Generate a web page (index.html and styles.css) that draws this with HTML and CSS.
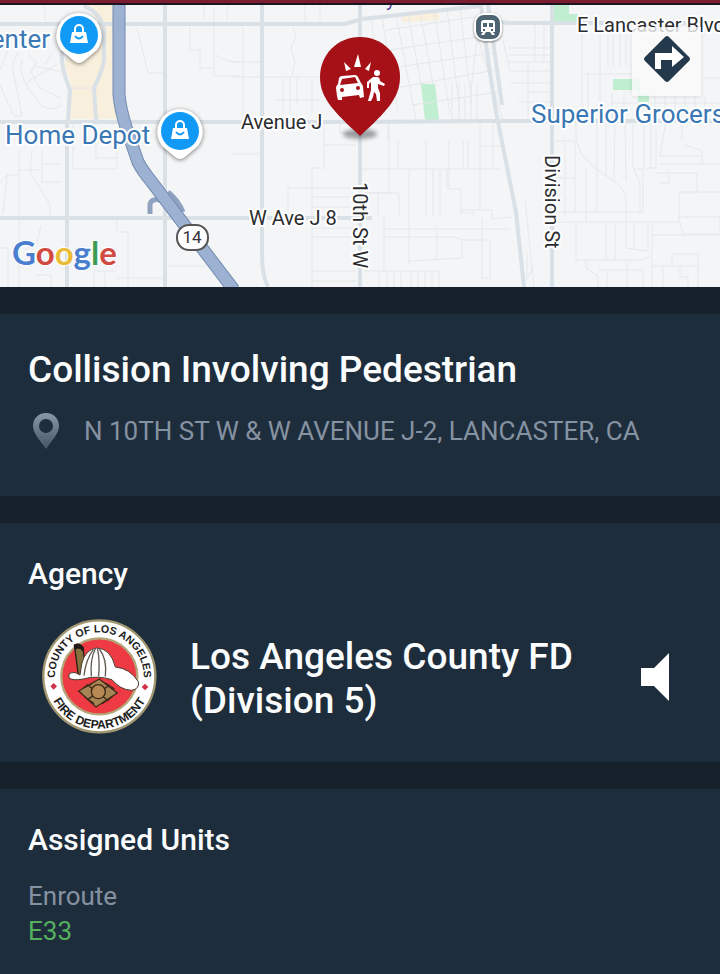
FILE: index.html
```
<!DOCTYPE html>
<html lang="en">
<head>
    <meta charset="UTF-8">
    <meta name="viewport" content="width=device-width, initial-scale=1.0">
    <title>Collision Involving Pedestrian</title>
    <link rel="stylesheet" href="styles.css">
</head>
<body>

    <header class="map">
        <svg class="map-canvas" viewBox="0 5 720 282" preserveAspectRatio="xMidYMid slice" role="img" aria-label="Incident map">
            <!-- parks and shopping areas -->
            <path class="sand" d="M84 5H114V95L119 119H70L72 88L64 62L75 50L98 45L98 20Z M401 17L438 12L440 20L403 22Z"/>
            <path class="park" d="M421 84H435L439 120H425Z M554 5H569V14H578V25H554Z M613 79H640V93H649V102H638V90H613Z"/>

            <!-- side streets -->
            <g class="street">
                <path d="M45 5V21 M8 50L0 70 M0 85L14 116H22L12 65L18 52 M22 60Q18 72 28 88L42 106Q54 112 61 105 M28 54L36 62L31 72L40 88L61 98 M27 82L57 64 M35 66L62 72 M52 54L45 64 M72 88H92"/>
                <path d="M137 27L148 73H163 M190 27V50H200V68H215 M214 8V76H240 M214 54Q226 62 240 62 M227 5V20 M204 5V20 M73 121V169H117V148 M96 121V158H117 M19 150V217 M32 150L30 172L38 185L50 205V217 M42 150V182H60 M0 182L7 175H18 M7 175L3 214 M41 164H60 M19 170H40 M19 220V287 M41 225L37 243L24 250 M117 218V232H128V278 M117 278H163 M128 278V287 M168 266H206 M94 270V287 M105 270V287 M94 271H117 M36 275H51V287 M0 248H8V287 M232 154H259"/>
                <path d="M243 27V61 M243 62V120 M230 62H260 M230 77H260 M293 27L296 36L291 48L295 62L292 75 M264 77H322 M283 78V113 M290 78V113 M297 78V105 M276 100H320 M305 5V22 M320 5V20 M312 78V113 M324 121V168H312V287 M288 217V188H355 M312 197H355 M312 207H355 M312 228H356 M312 237H356 M312 271H356 M312 281H356 M324 145H356 M340 122V133H356"/>
                <path d="M371 18L385 115 M382 17L398 112 M396 15L416 120 M408 14L421 84 M420 12L433 84 M434 10L450 114 M447 9L460 112 M460 8L472 106 M386 30L488 15 M389 50L492 35 M392 68L492 53 M396 88L495 70 M412 105L498 92 M452 84V120 M459 84V120 M465 84V120 M471 84V120 M477 84V120"/>
                <path d="M362 169H500 M388 122V140 M389 124V193H364 M398 140V168 M426 140V216 M433 169V216 M440 169V216 M447 169V189H461V213H475 M449 140V188 M463 140V168 M468 140V168 M378 193V217 M364 193H399V217 M384 217V270 M384 229H510 M384 237H455L462 240V258L408 261 M409 169V265 M437 229V260 M364 271H439V287 M379 271V287 M387 271V287 M394 271V287 M401 271V287 M411 271V287 M418 271V287 M425 271V287 M432 271V287"/>
                <path d="M462 240H490V278H482V218 M460 210H492V219L512 217 M482 146H502 M480 121V210 M493 122V170 M503 40L510 71H551 M508 48H552 M508 55H552 M508 62H552 M528 63V118 M510 83H552 M528 92H552 M518 102H552 M475 28L503 120 M478 30L471 90 M535 25V62 M544 25V62 M525 200L534 287 M527 254V279L534 266"/>
                <path d="M583 74H632 M600 25V120 M582 25V118 M608 34V66 M613 34V66 M620 34V66 M626 34V66 M588 72V120 M612 93V120 M624 93V120 M655 95V110 M665 95V110 M675 95V110 M685 95V110 M695 95V110 M705 95V110 M610 103H720 M704 78H720 M555 141H575V211 M565 141V217 M555 178H574"/>
                <path d="M576 121V140L582 155L595 168L612 180Q626 188 626 202V248L648 251V222 M586 168V222 M597 122V211 M606 122V176 M615 121L614 180 M625 122L626 181 M633 121V168L640 182V212 M644 121V168H656V121 M651 123V166 M660 164H720 M656 173H697V193H679V222 M669 173V183H660 M556 212H643V169H634 M556 222H680L683 234H720 M576 223V260H641L650 256 M606 223V260 M615 223V260 M634 223V250 M652 223V287 M652 235H720 M680 192H720 M678 217H720V234 M586 261V268L598 276V287 M598 270H643V287 M607 270V287 M627 262V287 M652 266H699 M672 266V254H698V287 M663 266V287 M680 266V277H688V287 M685 145L702 151V164 M666 121L660 156H702 M682 122V140"/>
            </g>

            <!-- avenues -->
            <g class="road">
                <path d="M0 24H345L362 19L480 6 M494 21L508 23H720 M0 122H355L488 121H720 M0 218H372 M165 5V287 M67 121V287 M262 5V255Q262 275 268 287 M360 5V287 M552 5V287"/>
                <path d="M84 6Q102 14 104 30L104 60Q102 72 94 88L96 121 M62 50Q60 66 70 90L68 121"/>
                <path d="M481 5Q486 50 497 117L516 212L524 287 M488 5L502 105"/>
            </g>

            <!-- CA-14 freeway -->
            <path class="ramp" d="M150 214V204Q152 198 160 200 M168 192Q178 200 183 212"/>
            <path class="freeway-edge" d="M119 5V94Q120 108 126 127L138 162Q142 170 151 181L234 290"/>
            <path class="freeway" d="M119 5V94Q120 108 126 127L138 162Q142 170 151 181L234 290"/>
            <rect class="shield" x="177" y="225" width="31" height="25" rx="12"/>
            <text class="shield-text" x="192" y="243" text-anchor="middle">14</text>

            <g class="label">
                <text x="241" y="129">Avenue J</text>
                <text x="249" y="225">W Ave J 8</text>
                <text x="577" y="32">E Lancaster Blvd</text>
                <text transform="translate(353 182) rotate(90)">10th St W</text>
                <text transform="translate(545 155) rotate(90)">Division St</text>
            </g>
            <g class="place">
                <text x="50" y="48" text-anchor="end">Center</text>
                <text x="5" y="144">Home Depot</text>
                <text x="531" y="123">Superior Grocers</text>
            </g>
            <text class="town" x="386" y="6">y</text>

            <!-- shop pins -->
            <g id="shop" class="shop">
                <path class="shop-pin" d="M79 13A23 23 0 0 0 61 50L74 61Q79 65 84 61L97 50A23 23 0 0 0 79 13Z"/>
                <circle class="shop-disc" cx="79" cy="35" r="19"/>
                <path class="shop-bag" d="M72 32H86L88 43H70Z"/>
                <path class="shop-handle" d="M75 32V29A4 4 0 0 1 83 29V32"/>
                <path class="shop-smile" d="M75 36Q79 41 83 36"/>
            </g>
            <use href="#shop" x="101" y="96"/>

            <!-- rail station -->
            <rect class="station" x="475" y="14" width="26" height="26" rx="9"/>
            <path class="train" d="M484 20H492Q495 20 495 23V32H493L495 35H492L490 32H486L484 35H481L483 32H481V23Q481 20 484 20Z"/>
            <path class="train-window" d="M483 23H487V27H483Z M489 23H493V27H489Z M483 29H485V31H483Z M491 29H493V31H491Z"/>

            <!-- incident pin -->
            <ellipse class="pin-shadow" cx="360" cy="134" rx="17" ry="5"/>
            <path class="pin" d="M360 37C337 37 320 55 320 77C320 98 334 112 360 136C386 112 400 98 400 77C400 55 383 37 360 37Z"/>
            <path class="pin-art" d="M358 54L361 67H354Z M344 62L351 69L346 71Z M371 62L369 71L365 69Z"/>
            <path class="pin-art" fill-rule="evenodd" d="M339 78Q340 76 342 76L355 75Q357 75 358 77L361 83Q363 85 363 87L364 97L360 98L359 95L342 97V100L338 100L337 96L336 88Q336 86 338 84ZM342 79L340 85L358 83L355 77ZM342 88A2 2 0 1 0 342 92A2 2 0 1 0 342 88ZM358 86A2 2 0 1 0 358 90A2 2 0 1 0 358 86Z"/>
            <circle class="pin-art" cx="377" cy="73" r="3"/>
            <path class="pin-art" d="M373 77H378Q380 78 380 81L385 84L384 86L378 84V88L380 93V101H377L376 94L374 92L373 97L371 101H368L371 90V82L369 84V88H367V82Z"/>

            <text class="google" x="12" y="265"><tspan class="blue">G</tspan><tspan class="red">o</tspan><tspan class="yellow">o</tspan><tspan class="blue">g</tspan><tspan class="green">l</tspan><tspan class="red">e</tspan></text>
        </svg>
        <button class="directions" type="button" aria-label="Directions">
            <svg width="48" height="48" viewBox="0 0 48 48">
                <path fill="#24394c" d="M22 2Q24 0 26 2L46 22Q48 24 46 26L26 46Q24 48 22 46L2 26Q0 24 2 22Z"/>
                <path fill="#fff" d="M12 34V18H29V11L41 22L29 32V25H18V34Z"/>
            </svg>
        </button>
    </header>

    <main class="details">
        <section class="card incident">
            <h1 class="title">Collision Involving Pedestrian</h1>
            <div class="address">
                <svg class="address-icon" width="36" height="36" viewBox="0 0 36 36" aria-hidden="true">
                    <defs>
                        <linearGradient id="fade" x1="0" y1="0" x2="0" y2="1">
                            <stop offset="0" stop-color="#8a97a6"/>
                            <stop offset="1" stop-color="#445566"/>
                        </linearGradient>
                    </defs>
                    <path fill="url(#fade)" fill-rule="evenodd" d="M18 0C10 0 5 6 5 13C5 20 11 26 18 36C25 26 31 20 31 13C31 6 26 0 18 0ZM18 6A7 7 0 1 1 18 20A7 7 0 1 1 18 6Z"/>
                </svg>
                <span>N 10TH ST W &amp; W AVENUE J-2, LANCASTER, CA</span>
            </div>
        </section>

        <section class="card agency">
            <h2 class="heading">Agency</h2>
            <div class="agency-row">
                <svg class="seal" viewBox="36 30 345 345" role="img" aria-label="County of Los Angeles Fire Department seal">
                    <defs>
                        <path id="seal-top" d="M75 203A133 133 0 0 1 341 203"/>
                        <path id="seal-bottom" d="M52 203A156 156 0 0 0 364 203"/>
                    </defs>
                    <circle cx="208" cy="202" r="168" fill="#fff" stroke="#a0966f" stroke-width="7"/>
                    <circle cx="208" cy="202" r="114" fill="#ee3a43" stroke="#b3a578" stroke-width="7"/>
                    <text class="seal-text" text-anchor="middle"><textPath href="#seal-top" startOffset="50%">COUNTY OF LOS ANGELES</textPath></text>
                    <text class="seal-text seal-text-bottom" text-anchor="middle"><textPath href="#seal-bottom" startOffset="50%">FIRE DEPARTMENT</textPath></text>
                    <path fill="#d03349" d="M71 222L81 232L71 242L61 232Z M345 224L355 234L345 244L335 234Z"/>
                    <!-- helmet -->
                    <path fill="#86703f" stroke="#2b2116" stroke-width="4" d="M133 108Q150 100 160 118L166 204L146 206Z"/>
                    <path fill="#1f1a17" d="M132 108Q145 98 161 114L158 128Q148 112 134 124Z"/>
                    <path fill="#fff" stroke="#4a3c30" stroke-width="3" d="M120 192Q135 186 150 198L155 165Q165 122 200 117Q242 118 256 174Q300 178 325 218Q330 240 304 244Q270 242 246 212Q200 198 160 210Q130 216 117 207Q115 198 120 192Z"/>
                    <path fill="none" stroke="#625b53" stroke-width="4" d="M184 202Q180 150 196 120 M206 202Q210 150 202 118 M226 203Q232 150 208 120 M162 200Q168 150 190 122"/>
                    <path fill="#a68453" stroke="#3c2918" stroke-width="4" d="M208 210L262 252L198 294L146 246Z"/>
                    <path fill="none" stroke="#3c2918" stroke-width="4" d="M170 226L236 276 M240 228L172 272 M160 236L186 224 M226 222L254 240 M164 264L192 284 M216 284L248 262"/>
                    <circle cx="205" cy="248" r="21" fill="#b98953" stroke="#3c2918" stroke-width="4"/>
                </svg>
                <p class="agency-name">Los Angeles County FD (Division 5)</p>
                <button class="speaker" type="button" aria-label="Listen">
                    <svg width="28" height="48" viewBox="0 0 28 48">
                        <path fill="#fff" d="M0 15H13L28 0V48L13 33H0Z"/>
                    </svg>
                </button>
            </div>
        </section>

        <section class="card units">
            <h2 class="heading">Assigned Units</h2>
            <p class="status">Enroute</p>
            <p class="unit">E33</p>
        </section>
    </main>

</body>
</html>
```
FILE: styles.css
```
* {
    box-sizing: border-box;
}
body {
    display: flex;
    flex-direction: column;
    min-height: 100vh;
    margin: 0;
    background-color: #16212c;
    color: #fafcfd;
    font-family: Roboto, "Liberation Sans", sans-serif;
}
h1, h2, p {
    margin: 0;
    font-weight: 500;
}
button {
    border: none;
    padding: 0;
    background: none;
    cursor: pointer;
}

/* map */
.map {
    position: relative;
    border-top: 3px solid #7b1d30;
    padding-top: 2px;
    background-color: #1d1420;
}
.map-canvas {
    display: block;
    width: 100%;
    height: 282px;
    background-color: #f4f5f6;
}
.sand {
    fill: #f8efdc;
}
.park {
    fill: #c0eed0;
}
.street {
    fill: none;
    stroke: #e5e8eb;
    stroke-width: 1;
}
.road {
    fill: none;
    stroke: #d9e0e6;
    stroke-width: 4;
}
.ramp {
    fill: none;
    stroke: #8fa3c0;
    stroke-width: 5;
}
.freeway-edge {
    fill: none;
    stroke: #718bb0;
    stroke-width: 13;
}
.freeway {
    fill: none;
    stroke: #9db1d2;
    stroke-width: 11;
}
.shield {
    fill: #fff;
    stroke: #555;
    stroke-width: 2;
}
.shield-text {
    fill: #333;
    font-size: 17px;
}
.label {
    fill: #2b2c2f;
    stroke: #fff;
    stroke-width: 4px;
    paint-order: stroke;
    stroke-linejoin: round;
    font-size: 20px;
}
.place {
    fill: #3a78b5;
    stroke: #fff;
    stroke-width: 4px;
    paint-order: stroke;
    stroke-linejoin: round;
    font-size: 26px;
}
.town {
    fill: #5b45a0;
    font-size: 20px;
}
.shop {
    filter: drop-shadow(0 1px 2px rgba(0, 0, 0, 0.5));
}
.shop-pin, .shop-bag {
    fill: #fff;
}
.shop-disc {
    fill: #109af5;
}
.shop-handle {
    fill: none;
    stroke: #fff;
    stroke-width: 2;
}
.shop-smile {
    fill: none;
    stroke: #109af5;
    stroke-width: 2;
}
.station {
    fill: #4d6572;
    stroke: #fff;
    stroke-width: 2;
    filter: drop-shadow(0 1px 1px rgba(0, 0, 0, 0.5));
}
.train {
    fill: #fff;
}
.train-window {
    fill: #4d6572;
}
.pin {
    fill: #a51117;
}
.pin-art {
    fill: #fff;
}
.pin-shadow {
    fill: rgba(60, 70, 75, 0.5);
    filter: blur(2px);
}
.google {
    stroke: #fff;
    stroke-width: 2px;
    paint-order: stroke;
    font-family: Lato, sans-serif;
    font-size: 33px;
    font-weight: 700;
}
.blue {
    fill: #4a7fd0;
}
.red {
    fill: #d14a42;
}
.yellow {
    fill: #eabb35;
}
.green {
    fill: #3d9c54;
}
.directions {
    position: absolute;
    top: 24px;
    right: 19px;
    display: flex;
    justify-content: center;
    width: 69px;
    height: 69px;
    padding-top: 8px;
    background-color: rgba(250, 250, 250, 0.8);
    box-shadow: 0 1px 4px rgba(0, 0, 0, 0.1);
}

/* details */
.details {
    flex: 1;
    display: flex;
    flex-direction: column;
    gap: 27px;
    padding-top: 27px;
}
.card {
    padding: 33px 28px 28px;
    background-color: #1e2d3c;
}
.units {
    flex: 1;
    padding-bottom: 20px;
}
.title {
    font-size: 37px;
    line-height: 46px;
}
.incident {
    padding-bottom: 47px;
}
.address {
    display: flex;
    align-items: center;
    gap: 20px;
    margin-top: 20px;
    color: #8592a1;
    font-size: 26px;
    line-height: 36px;
}
.address-icon {
    flex: none;
}
.heading {
    font-size: 30px;
    line-height: 36px;
}
.agency-row {
    display: flex;
    align-items: center;
    padding: 0 23px 0 14px;
    margin-top: 27px;
}
.seal {
    flex: none;
    width: 115px;
    height: 115px;
}
.seal-text {
    fill: #1c1c1c;
    font-family: "Liberation Sans", sans-serif;
    font-size: 32px;
    font-weight: 700;
}
.seal-text-bottom {
    font-size: 36px;
}
.agency-name {
    flex: 1;
    padding: 4px 40px 0 33px;
    font-size: 37px;
    line-height: 44px;
}
.speaker {
    display: flex;
}
.status, .unit {
    font-size: 26px;
    font-weight: 400;
    line-height: 35px;
}
.status {
    margin-top: 21px;
    color: #8592a1;
}
.unit {
    color: #55b05d;
}
```
